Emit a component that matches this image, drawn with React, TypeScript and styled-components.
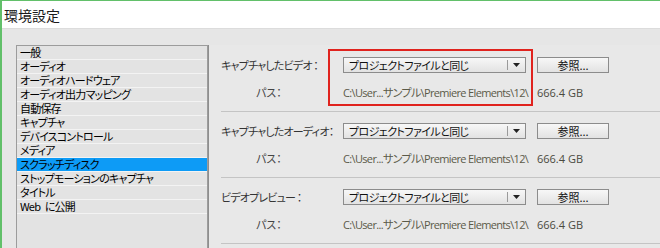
import { FC } from 'react';
import styled, { createGlobalStyle } from 'styled-components';

const GlobalStyle = createGlobalStyle`
  html, body {
    margin: 0;
    padding: 0;
    overflow: hidden;
  }
  body {
    font-family: 'Noto Sans CJK JP', 'Noto Sans', sans-serif;
    font-feature-settings: 'palt';
  }
`;

const categories = [
  '一般',
  'オーディオ',
  'オーディオハードウェア',
  'オーディオ出力マッピング',
  '自動保存',
  'キャプチャ',
  'デバイスコントロール',
  'メディア',
  'スクラッチディスク',
  'ストップモーションのキャプチャ',
  'タイトル',
  'Web に公開',
];

const groups = [
  { label: 'キャプチャしたビデオ ：', highlight: true },
  { label: 'キャプチャしたオーディオ：', highlight: false },
  { label: 'ビデオプレビュー ：', highlight: false },
];

const App: FC = () => {
  return (
    <Window>
      <GlobalStyle />
      <TitleBar>環境設定</TitleBar>
      <Body>
        <CategoryList>
          {categories.map(item => (
            <CategoryRow key={item} selected={item === 'スクラッチディスク'}>
              {item}
            </CategoryRow>
          ))}
        </CategoryList>
        <SettingsPanel>
          {groups.map(group => (
            <Group key={group.label}>
              {group.highlight && <Highlight />}
              <FieldRow>
                <Label>{group.label}</Label>
                <Dropdown>
                  <DropdownText>プロジェクトファイルと同じ</DropdownText>
                  <DropdownArrow>
                    <svg width="7" height="4" viewBox="0 0 7 4">
                      <path d="M0 0h7L3.5 4z" fill="#222" />
                    </svg>
                  </DropdownArrow>
                </Dropdown>
                <BrowseButton>参照...</BrowseButton>
              </FieldRow>
              <PathRow>
                <PathLabel>パス：</PathLabel>
                <PathText>C:\User...サンプル\Premiere Elements\12\</PathText>
                <FreeSpace>666.4 GB</FreeSpace>
              </PathRow>
            </Group>
          ))}
        </SettingsPanel>
      </Body>
    </Window>
  );
};

export default App;

const Window = styled.div`
  width: 660px;
  height: 248px;
  box-sizing: border-box;
  border-left: 2px solid #62c06a;
  border-top: 1px solid #62c06a;
  display: flex;
  flex-direction: column;
  overflow: hidden;
  background: #e6e6e6;
`;

const TitleBar = styled.div`
  height: 27px;
  flex-shrink: 0;
  background: #ffffff;
  display: flex;
  align-items: center;
  padding-left: 2px;
  font-size: 14px;
  color: #1a1a1a;
  border-bottom: 1px solid #dcdcdc;
`;

const Body = styled.div`
  flex: 1;
  display: flex;
  padding: 16px 0 0 14px;
  min-height: 0;
`;

const CategoryList = styled.div`
  width: 190px;
  flex-shrink: 0;
  border: 1px solid #9c9c9c;
  border-bottom: none;
  background: #e3e3e3;
  display: flex;
  flex-direction: column;
`;

const CategoryRow = styled.div<{ selected?: boolean }>`
  height: 13px;
  line-height: 13px;
  overflow: hidden;
  border-bottom: 1px solid #f3f3f3;
  padding-left: 3px;
  font-size: 11px;
  letter-spacing: -0.8px;
  word-spacing: 3px;
  color: #000;
  white-space: nowrap;
  background: ${({ selected }) => (selected ? '#0d9bf6' : 'transparent')};
`;

const SettingsPanel = styled.div`
  flex: 1;
  border-left: 1px solid #8e8e8e;
  padding: 1px 0 0 12px;
  background: #e8e8e8;
  display: flex;
  flex-direction: column;
`;

const Group = styled.div`
  position: relative;
  padding: 11px 0 11px;
  border-bottom: 1px solid #c4c4c4;
`;

const Highlight = styled.div`
  position: absolute;
  left: 107px;
  top: 3px;
  width: 205px;
  height: 57px;
  box-sizing: border-box;
  border: 2px solid #e0231e;
  pointer-events: none;
`;

const FieldRow = styled.div`
  display: flex;
  align-items: center;
  height: 16px;
`;

const Label = styled.div`
  width: 122px;
  font-size: 11px;
  letter-spacing: -0.8px;
  color: #333;
  white-space: nowrap;
`;

const Dropdown = styled.div`
  width: 183px;
  height: 16px;
  box-sizing: border-box;
  border: 1px solid #8c8c8c;
  background: linear-gradient(#f7f7f7, #e2e2e2);
  display: flex;
  align-items: center;
`;

const DropdownText = styled.div`
  flex: 1;
  padding-left: 5px;
  font-size: 11px;
  letter-spacing: -0.6px;
  color: #111;
  white-space: nowrap;
`;

const DropdownArrow = styled.div`
  width: 17px;
  height: 10px;
  border-left: 1px solid #9a9a9a;
  display: flex;
  align-items: center;
  justify-content: center;
`;

const BrowseButton = styled.div`
  margin-left: 11px;
  width: 72px;
  height: 16px;
  box-sizing: border-box;
  border: 1px solid #8c8c8c;
  background: linear-gradient(#f7f7f7, #e2e2e2);
  display: flex;
  align-items: center;
  justify-content: center;
  font-size: 11px;
  color: #111;
`;

const PathRow = styled.div`
  display: flex;
  align-items: center;
  height: 16px;
  margin-top: 11px;
`;

const PathLabel = styled.div`
  width: 122px;
  padding-left: 35px;
  box-sizing: border-box;
  font-size: 11px;
  color: #444;
`;

const PathText = styled.div`
  width: 194px;
  font-family: 'Open Sans', 'Noto Sans CJK JP', sans-serif;
  font-size: 11px;
  color: #5b5a48;
  white-space: nowrap;
  letter-spacing: -0.65px;
`;

const FreeSpace = styled.div`
  font-family: 'Open Sans', sans-serif;
  font-size: 11px;
  color: #4a4a40;
`;
